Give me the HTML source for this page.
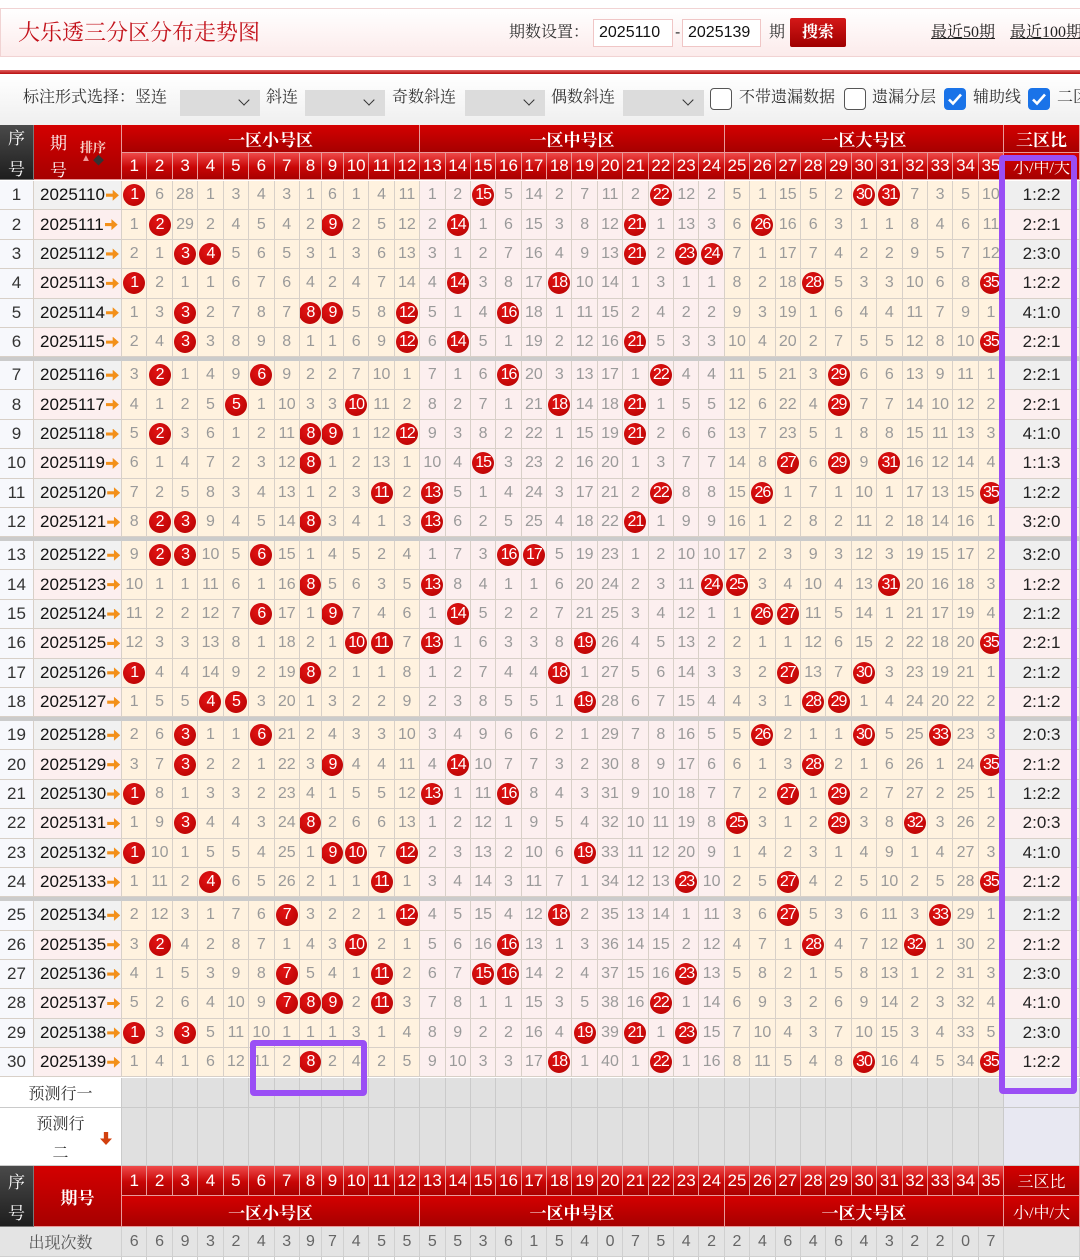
<!DOCTYPE html>
<html><head><meta charset="utf-8"><style>
*{box-sizing:border-box}
body{margin:0;width:1080px;height:1260px;overflow:hidden;position:relative;background:#fff;font-family:"Liberation Sans","Noto Sans CJK SC",sans-serif}
.a{position:absolute}
.ser{font-family:"Liberation Serif","Noto Serif CJK SC",serif}
.tb{left:0;top:8px;width:1100px;height:49px;border:1px solid #f1d3d3;background:linear-gradient(#fff,#fcebeb)}
.t{left:18px;top:8px;line-height:49px;font-size:22px;color:#c3121b}
.lab{font-size:16px;color:#333;line-height:28px}
.inp{top:19px;height:28px;border:1px solid #f0c6c6;background:#fff;font-size:16px;line-height:26px;padding-left:5px;color:#111}
.btn{left:790px;top:18px;width:56px;height:29px;background:linear-gradient(#d41818,#a00000);color:#fff;font-weight:bold;font-size:16px;text-align:center;line-height:29px;border-radius:2px}
.lk{top:19px;font-size:16px;color:#222;text-decoration:underline;line-height:28px}
.rl{left:0;top:70px;width:1080px;height:4px;background:linear-gradient(#e06060,#b80f0f)}
.opt{left:0;top:75px;width:1080px;height:50px;background:linear-gradient(#fff,#efefef)}
.sel{top:90px;height:26px;background:#dcdcdc}
.sel:after{content:"";position:absolute;right:12px;top:6px;width:7px;height:7px;border-right:1.5px solid #333;border-bottom:1.5px solid #333;transform:rotate(45deg)}
.ol{top:84px;font-size:16px;color:#333;line-height:28px}
.cb{top:88px;width:22px;height:22px;border:1.5px solid #555;border-radius:4px;background:#fff}
.ck{top:88px;width:22px;height:22px;border-radius:4px;background:#1a73e8}
.g{display:grid;grid-template-columns:34px 88px repeat(7,25.43px) 22px 22px repeat(26,25.4px) 1fr}
.hd{left:0;top:125px;width:1080px;grid-template-rows:28px 27px}
.hd>div,.fh>div{display:flex;align-items:center;justify-content:center;color:#fff;border-right:1px solid #e89a9a;border-bottom:1px solid #e89a9a}
.dk{background:linear-gradient(#4a4a4a,#1e1e1e)!important;flex-direction:column;font-size:17px;border-color:#777!important}
.rd{background:linear-gradient(#d40000,#a60000)}
.zl{font-size:17px;font-weight:bold}
.nm{background:linear-gradient(#ef4a4a,#c80606 55%,#a80000);font-size:17px}
.body{left:0;top:181px;width:1080px}
.r{height:29.4px}
.r>p{margin:0;border-right:1px solid #d8d0c8;border-bottom:1px solid #d8d0c8;display:flex;align-items:center;justify-content:center;font-size:16px;color:#9a9a9a;overflow:hidden;white-space:nowrap;background:#fff2df}
.r>p:nth-child(n+15):nth-child(-n+26){background:#fcefef}
.r>p:nth-child(1){background:#f7f8fc;color:#333;font-size:17px}
.r>p:nth-child(2){background:#f1f1f1;color:#111;font-size:17px;justify-content:flex-start;padding-left:6px}
.r>p:nth-child(2):after{content:"";width:13px;height:11px;margin-left:1px;background:#f39019;clip-path:polygon(0 36%,52% 36%,52% 0,100% 50%,52% 100%,52% 64%,0 64%)}
.r>p:nth-child(38){background:#efefef;color:#222;font-size:17px}
.r:nth-child(even)>p:nth-child(2),.r:nth-child(even)>p:nth-child(38){background:#fcefef}
.r b{display:flex;flex:none;width:22px;height:22px;border-radius:50%;background:radial-gradient(circle at 40% 35%,#e31414,#b20000);color:#fff;font-weight:normal;font-size:16px;align-items:center;justify-content:center;letter-spacing:-1px}
.sep{height:3.7px;background:#cbcbcb}
.pr{left:0;width:1080px}
.pr>p{margin:0;background:#e0e0e0;border-right:1px solid #cacaca;border-bottom:1px solid #cacaca}
.pr>p:first-child{grid-column:1/3;background:#fff;display:flex;align-items:center;justify-content:center;flex-direction:column;font-size:16px;color:#333}
.pr>p:last-child{background:#e8e8f2}
.fh{left:0;top:1166px;width:1080px;grid-template-rows:30px 31px}
.oc{left:0;top:1227px;width:1080px;height:30px}
.oc>p{margin:0;background:#e4e4e4;border-right:1px solid #d0d0d0;border-bottom:1px solid #d0d0d0;display:flex;align-items:center;justify-content:center;font-size:16px;color:#666}
.oc>p:first-child{grid-column:1/3;color:#555}
.lr{left:0;top:1257px;width:1080px;height:3px}
.lr>p{margin:0;border-right:1px solid #d0d0d0;background:#fff}
.pp{border:6px solid #9a4ef5;border-radius:4px;z-index:5}
</style></head><body>
<div class="a tb"></div>
<div class="a t ser">大乐透三分区分布走势图</div>
<div class="a lab ser" style="left:509px;top:19px">期数设置：</div>
<div class="a inp" style="left:593px;width:80px">2025110</div>
<div class="a lab" style="left:675px;top:19px">-</div>
<div class="a inp" style="left:682px;width:79px">2025139</div>
<div class="a lab ser" style="left:769px;top:19px">期</div>
<div class="a btn ser">搜索</div>
<div class="a lk ser" style="left:931px">最近50期</div>
<div class="a lk ser" style="left:1010px;white-space:nowrap">最近100期</div>
<div class="a rl"></div>
<div class="a opt"></div>
<div class="a ol ser" style="left:23px">标注形式选择：竖连</div>
<div class="a sel" style="left:180px;width:80px"></div>
<div class="a ol ser" style="left:266px">斜连</div>
<div class="a sel" style="left:305px;width:80px"></div>
<div class="a ol ser" style="left:392px">奇数斜连</div>
<div class="a sel" style="left:465px;width:80px"></div>
<div class="a ol ser" style="left:551px">偶数斜连</div>
<div class="a sel" style="left:623px;width:81px"></div>
<div class="a cb" style="left:710px"></div>
<div class="a ol ser" style="left:739px">不带遗漏数据</div>
<div class="a cb" style="left:844px"></div>
<div class="a ol ser" style="left:872px">遗漏分层</div>
<div class="a ck" style="left:944px"><svg width="22" height="22"><path d="M5 11.5l4 4 8-9" fill="none" stroke="#fff" stroke-width="2.6"/></svg></div>
<div class="a ol ser" style="left:973px">辅助线</div>
<div class="a ck" style="left:1028px"><svg width="22" height="22"><path d="M5 11.5l4 4 8-9" fill="none" stroke="#fff" stroke-width="2.6"/></svg></div>
<div class="a ol ser" style="left:1057px;white-space:nowrap">二区</div>

<div class="a g hd">
<div class="dk ser" style="grid-column:1;grid-row:1/3"><span>序</span><span style="margin-top:6px">号</span></div>
<div class="rd ser" style="grid-column:2;grid-row:1/3;position:relative;font-size:17px"><span style="position:absolute;left:16px;top:4px">期</span><span style="position:absolute;left:16px;top:31px">号</span><span style="position:absolute;left:46px;top:12px;font-size:13px;font-weight:bold;color:#f7d0c6">排序</span><span style="position:absolute;left:47px;top:28px;font-size:10px;color:#e99">▲</span><span style="position:absolute;left:59px;top:27px;font-size:11px;color:#333">◆</span></div>
<div class="rd zl ser" style="grid-column:3/15;grid-row:1">一区小号区</div>
<div class="rd zl ser" style="grid-column:15/27;grid-row:1">一区中号区</div>
<div class="rd zl ser" style="grid-column:27/38;grid-row:1">一区大号区</div>
<div class="rd zl ser" style="grid-column:38;grid-row:1">三区比</div>
<div class="nm">1</div><div class="nm">2</div><div class="nm">3</div><div class="nm">4</div><div class="nm">5</div><div class="nm">6</div><div class="nm">7</div><div class="nm">8</div><div class="nm">9</div><div class="nm">10</div><div class="nm">11</div><div class="nm">12</div><div class="nm">13</div><div class="nm">14</div><div class="nm">15</div><div class="nm">16</div><div class="nm">17</div><div class="nm">18</div><div class="nm">19</div><div class="nm">20</div><div class="nm">21</div><div class="nm">22</div><div class="nm">23</div><div class="nm">24</div><div class="nm">25</div><div class="nm">26</div><div class="nm">27</div><div class="nm">28</div><div class="nm">29</div><div class="nm">30</div><div class="nm">31</div><div class="nm">32</div><div class="nm">33</div><div class="nm">34</div><div class="nm">35</div><div class="rd ser" style="font-size:16px">小/中/大</div>
</div>

<div class="a body">
<div>
<div class="g r"><p>1</p><p>2025110</p><p><b>1</b></p><p>6</p><p>28</p><p>1</p><p>3</p><p>4</p><p>3</p><p>1</p><p>6</p><p>1</p><p>4</p><p>11</p><p>1</p><p>2</p><p><b>15</b></p><p>5</p><p>14</p><p>2</p><p>7</p><p>11</p><p>2</p><p><b>22</b></p><p>12</p><p>2</p><p>5</p><p>1</p><p>15</p><p>5</p><p>2</p><p><b>30</b></p><p><b>31</b></p><p>7</p><p>3</p><p>5</p><p>10</p><p>1:2:2</p></div>
<div class="g r"><p>2</p><p>2025111</p><p>1</p><p><b>2</b></p><p>29</p><p>2</p><p>4</p><p>5</p><p>4</p><p>2</p><p><b>9</b></p><p>2</p><p>5</p><p>12</p><p>2</p><p><b>14</b></p><p>1</p><p>6</p><p>15</p><p>3</p><p>8</p><p>12</p><p><b>21</b></p><p>1</p><p>13</p><p>3</p><p>6</p><p><b>26</b></p><p>16</p><p>6</p><p>3</p><p>1</p><p>1</p><p>8</p><p>4</p><p>6</p><p>11</p><p>2:2:1</p></div>
<div class="g r"><p>3</p><p>2025112</p><p>2</p><p>1</p><p><b>3</b></p><p><b>4</b></p><p>5</p><p>6</p><p>5</p><p>3</p><p>1</p><p>3</p><p>6</p><p>13</p><p>3</p><p>1</p><p>2</p><p>7</p><p>16</p><p>4</p><p>9</p><p>13</p><p><b>21</b></p><p>2</p><p><b>23</b></p><p><b>24</b></p><p>7</p><p>1</p><p>17</p><p>7</p><p>4</p><p>2</p><p>2</p><p>9</p><p>5</p><p>7</p><p>12</p><p>2:3:0</p></div>
<div class="g r"><p>4</p><p>2025113</p><p><b>1</b></p><p>2</p><p>1</p><p>1</p><p>6</p><p>7</p><p>6</p><p>4</p><p>2</p><p>4</p><p>7</p><p>14</p><p>4</p><p><b>14</b></p><p>3</p><p>8</p><p>17</p><p><b>18</b></p><p>10</p><p>14</p><p>1</p><p>3</p><p>1</p><p>1</p><p>8</p><p>2</p><p>18</p><p><b>28</b></p><p>5</p><p>3</p><p>3</p><p>10</p><p>6</p><p>8</p><p><b>35</b></p><p>1:2:2</p></div>
<div class="g r"><p>5</p><p>2025114</p><p>1</p><p>3</p><p><b>3</b></p><p>2</p><p>7</p><p>8</p><p>7</p><p><b>8</b></p><p><b>9</b></p><p>5</p><p>8</p><p><b>12</b></p><p>5</p><p>1</p><p>4</p><p><b>16</b></p><p>18</p><p>1</p><p>11</p><p>15</p><p>2</p><p>4</p><p>2</p><p>2</p><p>9</p><p>3</p><p>19</p><p>1</p><p>6</p><p>4</p><p>4</p><p>11</p><p>7</p><p>9</p><p>1</p><p>4:1:0</p></div>
<div class="g r"><p>6</p><p>2025115</p><p>2</p><p>4</p><p><b>3</b></p><p>3</p><p>8</p><p>9</p><p>8</p><p>1</p><p>1</p><p>6</p><p>9</p><p><b>12</b></p><p>6</p><p><b>14</b></p><p>5</p><p>1</p><p>19</p><p>2</p><p>12</p><p>16</p><p><b>21</b></p><p>5</p><p>3</p><p>3</p><p>10</p><p>4</p><p>20</p><p>2</p><p>7</p><p>5</p><p>5</p><p>12</p><p>8</p><p>10</p><p><b>35</b></p><p>2:2:1</p></div>
</div>
<div class="sep"></div>
<div>
<div class="g r"><p>7</p><p>2025116</p><p>3</p><p><b>2</b></p><p>1</p><p>4</p><p>9</p><p><b>6</b></p><p>9</p><p>2</p><p>2</p><p>7</p><p>10</p><p>1</p><p>7</p><p>1</p><p>6</p><p><b>16</b></p><p>20</p><p>3</p><p>13</p><p>17</p><p>1</p><p><b>22</b></p><p>4</p><p>4</p><p>11</p><p>5</p><p>21</p><p>3</p><p><b>29</b></p><p>6</p><p>6</p><p>13</p><p>9</p><p>11</p><p>1</p><p>2:2:1</p></div>
<div class="g r"><p>8</p><p>2025117</p><p>4</p><p>1</p><p>2</p><p>5</p><p><b>5</b></p><p>1</p><p>10</p><p>3</p><p>3</p><p><b>10</b></p><p>11</p><p>2</p><p>8</p><p>2</p><p>7</p><p>1</p><p>21</p><p><b>18</b></p><p>14</p><p>18</p><p><b>21</b></p><p>1</p><p>5</p><p>5</p><p>12</p><p>6</p><p>22</p><p>4</p><p><b>29</b></p><p>7</p><p>7</p><p>14</p><p>10</p><p>12</p><p>2</p><p>2:2:1</p></div>
<div class="g r"><p>9</p><p>2025118</p><p>5</p><p><b>2</b></p><p>3</p><p>6</p><p>1</p><p>2</p><p>11</p><p><b>8</b></p><p><b>9</b></p><p>1</p><p>12</p><p><b>12</b></p><p>9</p><p>3</p><p>8</p><p>2</p><p>22</p><p>1</p><p>15</p><p>19</p><p><b>21</b></p><p>2</p><p>6</p><p>6</p><p>13</p><p>7</p><p>23</p><p>5</p><p>1</p><p>8</p><p>8</p><p>15</p><p>11</p><p>13</p><p>3</p><p>4:1:0</p></div>
<div class="g r"><p>10</p><p>2025119</p><p>6</p><p>1</p><p>4</p><p>7</p><p>2</p><p>3</p><p>12</p><p><b>8</b></p><p>1</p><p>2</p><p>13</p><p>1</p><p>10</p><p>4</p><p><b>15</b></p><p>3</p><p>23</p><p>2</p><p>16</p><p>20</p><p>1</p><p>3</p><p>7</p><p>7</p><p>14</p><p>8</p><p><b>27</b></p><p>6</p><p><b>29</b></p><p>9</p><p><b>31</b></p><p>16</p><p>12</p><p>14</p><p>4</p><p>1:1:3</p></div>
<div class="g r"><p>11</p><p>2025120</p><p>7</p><p>2</p><p>5</p><p>8</p><p>3</p><p>4</p><p>13</p><p>1</p><p>2</p><p>3</p><p><b>11</b></p><p>2</p><p><b>13</b></p><p>5</p><p>1</p><p>4</p><p>24</p><p>3</p><p>17</p><p>21</p><p>2</p><p><b>22</b></p><p>8</p><p>8</p><p>15</p><p><b>26</b></p><p>1</p><p>7</p><p>1</p><p>10</p><p>1</p><p>17</p><p>13</p><p>15</p><p><b>35</b></p><p>1:2:2</p></div>
<div class="g r"><p>12</p><p>2025121</p><p>8</p><p><b>2</b></p><p><b>3</b></p><p>9</p><p>4</p><p>5</p><p>14</p><p><b>8</b></p><p>3</p><p>4</p><p>1</p><p>3</p><p><b>13</b></p><p>6</p><p>2</p><p>5</p><p>25</p><p>4</p><p>18</p><p>22</p><p><b>21</b></p><p>1</p><p>9</p><p>9</p><p>16</p><p>1</p><p>2</p><p>8</p><p>2</p><p>11</p><p>2</p><p>18</p><p>14</p><p>16</p><p>1</p><p>3:2:0</p></div>
</div>
<div class="sep"></div>
<div>
<div class="g r"><p>13</p><p>2025122</p><p>9</p><p><b>2</b></p><p><b>3</b></p><p>10</p><p>5</p><p><b>6</b></p><p>15</p><p>1</p><p>4</p><p>5</p><p>2</p><p>4</p><p>1</p><p>7</p><p>3</p><p><b>16</b></p><p><b>17</b></p><p>5</p><p>19</p><p>23</p><p>1</p><p>2</p><p>10</p><p>10</p><p>17</p><p>2</p><p>3</p><p>9</p><p>3</p><p>12</p><p>3</p><p>19</p><p>15</p><p>17</p><p>2</p><p>3:2:0</p></div>
<div class="g r"><p>14</p><p>2025123</p><p>10</p><p>1</p><p>1</p><p>11</p><p>6</p><p>1</p><p>16</p><p><b>8</b></p><p>5</p><p>6</p><p>3</p><p>5</p><p><b>13</b></p><p>8</p><p>4</p><p>1</p><p>1</p><p>6</p><p>20</p><p>24</p><p>2</p><p>3</p><p>11</p><p><b>24</b></p><p><b>25</b></p><p>3</p><p>4</p><p>10</p><p>4</p><p>13</p><p><b>31</b></p><p>20</p><p>16</p><p>18</p><p>3</p><p>1:2:2</p></div>
<div class="g r"><p>15</p><p>2025124</p><p>11</p><p>2</p><p>2</p><p>12</p><p>7</p><p><b>6</b></p><p>17</p><p>1</p><p><b>9</b></p><p>7</p><p>4</p><p>6</p><p>1</p><p><b>14</b></p><p>5</p><p>2</p><p>2</p><p>7</p><p>21</p><p>25</p><p>3</p><p>4</p><p>12</p><p>1</p><p>1</p><p><b>26</b></p><p><b>27</b></p><p>11</p><p>5</p><p>14</p><p>1</p><p>21</p><p>17</p><p>19</p><p>4</p><p>2:1:2</p></div>
<div class="g r"><p>16</p><p>2025125</p><p>12</p><p>3</p><p>3</p><p>13</p><p>8</p><p>1</p><p>18</p><p>2</p><p>1</p><p><b>10</b></p><p><b>11</b></p><p>7</p><p><b>13</b></p><p>1</p><p>6</p><p>3</p><p>3</p><p>8</p><p><b>19</b></p><p>26</p><p>4</p><p>5</p><p>13</p><p>2</p><p>2</p><p>1</p><p>1</p><p>12</p><p>6</p><p>15</p><p>2</p><p>22</p><p>18</p><p>20</p><p><b>35</b></p><p>2:2:1</p></div>
<div class="g r"><p>17</p><p>2025126</p><p><b>1</b></p><p>4</p><p>4</p><p>14</p><p>9</p><p>2</p><p>19</p><p><b>8</b></p><p>2</p><p>1</p><p>1</p><p>8</p><p>1</p><p>2</p><p>7</p><p>4</p><p>4</p><p><b>18</b></p><p>1</p><p>27</p><p>5</p><p>6</p><p>14</p><p>3</p><p>3</p><p>2</p><p><b>27</b></p><p>13</p><p>7</p><p><b>30</b></p><p>3</p><p>23</p><p>19</p><p>21</p><p>1</p><p>2:1:2</p></div>
<div class="g r"><p>18</p><p>2025127</p><p>1</p><p>5</p><p>5</p><p><b>4</b></p><p><b>5</b></p><p>3</p><p>20</p><p>1</p><p>3</p><p>2</p><p>2</p><p>9</p><p>2</p><p>3</p><p>8</p><p>5</p><p>5</p><p>1</p><p><b>19</b></p><p>28</p><p>6</p><p>7</p><p>15</p><p>4</p><p>4</p><p>3</p><p>1</p><p><b>28</b></p><p><b>29</b></p><p>1</p><p>4</p><p>24</p><p>20</p><p>22</p><p>2</p><p>2:1:2</p></div>
</div>
<div class="sep"></div>
<div>
<div class="g r"><p>19</p><p>2025128</p><p>2</p><p>6</p><p><b>3</b></p><p>1</p><p>1</p><p><b>6</b></p><p>21</p><p>2</p><p>4</p><p>3</p><p>3</p><p>10</p><p>3</p><p>4</p><p>9</p><p>6</p><p>6</p><p>2</p><p>1</p><p>29</p><p>7</p><p>8</p><p>16</p><p>5</p><p>5</p><p><b>26</b></p><p>2</p><p>1</p><p>1</p><p><b>30</b></p><p>5</p><p>25</p><p><b>33</b></p><p>23</p><p>3</p><p>2:0:3</p></div>
<div class="g r"><p>20</p><p>2025129</p><p>3</p><p>7</p><p><b>3</b></p><p>2</p><p>2</p><p>1</p><p>22</p><p>3</p><p><b>9</b></p><p>4</p><p>4</p><p>11</p><p>4</p><p><b>14</b></p><p>10</p><p>7</p><p>7</p><p>3</p><p>2</p><p>30</p><p>8</p><p>9</p><p>17</p><p>6</p><p>6</p><p>1</p><p>3</p><p><b>28</b></p><p>2</p><p>1</p><p>6</p><p>26</p><p>1</p><p>24</p><p><b>35</b></p><p>2:1:2</p></div>
<div class="g r"><p>21</p><p>2025130</p><p><b>1</b></p><p>8</p><p>1</p><p>3</p><p>3</p><p>2</p><p>23</p><p>4</p><p>1</p><p>5</p><p>5</p><p>12</p><p><b>13</b></p><p>1</p><p>11</p><p><b>16</b></p><p>8</p><p>4</p><p>3</p><p>31</p><p>9</p><p>10</p><p>18</p><p>7</p><p>7</p><p>2</p><p><b>27</b></p><p>1</p><p><b>29</b></p><p>2</p><p>7</p><p>27</p><p>2</p><p>25</p><p>1</p><p>1:2:2</p></div>
<div class="g r"><p>22</p><p>2025131</p><p>1</p><p>9</p><p><b>3</b></p><p>4</p><p>4</p><p>3</p><p>24</p><p><b>8</b></p><p>2</p><p>6</p><p>6</p><p>13</p><p>1</p><p>2</p><p>12</p><p>1</p><p>9</p><p>5</p><p>4</p><p>32</p><p>10</p><p>11</p><p>19</p><p>8</p><p><b>25</b></p><p>3</p><p>1</p><p>2</p><p><b>29</b></p><p>3</p><p>8</p><p><b>32</b></p><p>3</p><p>26</p><p>2</p><p>2:0:3</p></div>
<div class="g r"><p>23</p><p>2025132</p><p><b>1</b></p><p>10</p><p>1</p><p>5</p><p>5</p><p>4</p><p>25</p><p>1</p><p><b>9</b></p><p><b>10</b></p><p>7</p><p><b>12</b></p><p>2</p><p>3</p><p>13</p><p>2</p><p>10</p><p>6</p><p><b>19</b></p><p>33</p><p>11</p><p>12</p><p>20</p><p>9</p><p>1</p><p>4</p><p>2</p><p>3</p><p>1</p><p>4</p><p>9</p><p>1</p><p>4</p><p>27</p><p>3</p><p>4:1:0</p></div>
<div class="g r"><p>24</p><p>2025133</p><p>1</p><p>11</p><p>2</p><p><b>4</b></p><p>6</p><p>5</p><p>26</p><p>2</p><p>1</p><p>1</p><p><b>11</b></p><p>1</p><p>3</p><p>4</p><p>14</p><p>3</p><p>11</p><p>7</p><p>1</p><p>34</p><p>12</p><p>13</p><p><b>23</b></p><p>10</p><p>2</p><p>5</p><p><b>27</b></p><p>4</p><p>2</p><p>5</p><p>10</p><p>2</p><p>5</p><p>28</p><p><b>35</b></p><p>2:1:2</p></div>
</div>
<div class="sep"></div>
<div>
<div class="g r"><p>25</p><p>2025134</p><p>2</p><p>12</p><p>3</p><p>1</p><p>7</p><p>6</p><p><b>7</b></p><p>3</p><p>2</p><p>2</p><p>1</p><p><b>12</b></p><p>4</p><p>5</p><p>15</p><p>4</p><p>12</p><p><b>18</b></p><p>2</p><p>35</p><p>13</p><p>14</p><p>1</p><p>11</p><p>3</p><p>6</p><p><b>27</b></p><p>5</p><p>3</p><p>6</p><p>11</p><p>3</p><p><b>33</b></p><p>29</p><p>1</p><p>2:1:2</p></div>
<div class="g r"><p>26</p><p>2025135</p><p>3</p><p><b>2</b></p><p>4</p><p>2</p><p>8</p><p>7</p><p>1</p><p>4</p><p>3</p><p><b>10</b></p><p>2</p><p>1</p><p>5</p><p>6</p><p>16</p><p><b>16</b></p><p>13</p><p>1</p><p>3</p><p>36</p><p>14</p><p>15</p><p>2</p><p>12</p><p>4</p><p>7</p><p>1</p><p><b>28</b></p><p>4</p><p>7</p><p>12</p><p><b>32</b></p><p>1</p><p>30</p><p>2</p><p>2:1:2</p></div>
<div class="g r"><p>27</p><p>2025136</p><p>4</p><p>1</p><p>5</p><p>3</p><p>9</p><p>8</p><p><b>7</b></p><p>5</p><p>4</p><p>1</p><p><b>11</b></p><p>2</p><p>6</p><p>7</p><p><b>15</b></p><p><b>16</b></p><p>14</p><p>2</p><p>4</p><p>37</p><p>15</p><p>16</p><p><b>23</b></p><p>13</p><p>5</p><p>8</p><p>2</p><p>1</p><p>5</p><p>8</p><p>13</p><p>1</p><p>2</p><p>31</p><p>3</p><p>2:3:0</p></div>
<div class="g r"><p>28</p><p>2025137</p><p>5</p><p>2</p><p>6</p><p>4</p><p>10</p><p>9</p><p><b>7</b></p><p><b>8</b></p><p><b>9</b></p><p>2</p><p><b>11</b></p><p>3</p><p>7</p><p>8</p><p>1</p><p>1</p><p>15</p><p>3</p><p>5</p><p>38</p><p>16</p><p><b>22</b></p><p>1</p><p>14</p><p>6</p><p>9</p><p>3</p><p>2</p><p>6</p><p>9</p><p>14</p><p>2</p><p>3</p><p>32</p><p>4</p><p>4:1:0</p></div>
<div class="g r"><p>29</p><p>2025138</p><p><b>1</b></p><p>3</p><p><b>3</b></p><p>5</p><p>11</p><p>10</p><p>1</p><p>1</p><p>1</p><p>3</p><p>1</p><p>4</p><p>8</p><p>9</p><p>2</p><p>2</p><p>16</p><p>4</p><p><b>19</b></p><p>39</p><p><b>21</b></p><p>1</p><p><b>23</b></p><p>15</p><p>7</p><p>10</p><p>4</p><p>3</p><p>7</p><p>10</p><p>15</p><p>3</p><p>4</p><p>33</p><p>5</p><p>2:3:0</p></div>
<div class="g r"><p>30</p><p>2025139</p><p>1</p><p>4</p><p>1</p><p>6</p><p>12</p><p>11</p><p>2</p><p><b>8</b></p><p>2</p><p>4</p><p>2</p><p>5</p><p>9</p><p>10</p><p>3</p><p>3</p><p>17</p><p><b>18</b></p><p>1</p><p>40</p><p>1</p><p><b>22</b></p><p>1</p><p>16</p><p>8</p><p>11</p><p>5</p><p>4</p><p>8</p><p><b>30</b></p><p>16</p><p>4</p><p>5</p><p>34</p><p><b>35</b></p><p>1:2:2</p></div>
</div>
</div>

<div class="a g pr" style="top:1078px;height:30px"><p class="ser">预测行一</p><p></p><p></p><p></p><p></p><p></p><p></p><p></p><p></p><p></p><p></p><p></p><p></p><p></p><p></p><p></p><p></p><p></p><p></p><p></p><p></p><p></p><p></p><p></p><p></p><p></p><p></p><p></p><p></p><p></p><p></p><p></p><p></p><p></p><p></p><p></p><p></p></div>
<div class="a g pr" style="top:1108px;height:58px"><p class="ser"><span>预测行</span><span style="margin-top:6px">二</span></p><p></p><p></p><p></p><p></p><p></p><p></p><p></p><p></p><p></p><p></p><p></p><p></p><p></p><p></p><p></p><p></p><p></p><p></p><p></p><p></p><p></p><p></p><p></p><p></p><p></p><p></p><p></p><p></p><p></p><p></p><p></p><p></p><p></p><p></p><p></p><p></p></div>
<div class="a" style="left:100px;top:1132px;width:12px;height:13px;background:#d2400e;clip-path:polygon(32% 0,68% 0,68% 50%,100% 50%,50% 100%,0 50%,32% 50%)"></div>

<div class="a g fh">
<div class="dk ser" style="grid-column:1;grid-row:1/3"><span>序</span><span style="margin-top:6px">号</span></div>
<div class="rd ser" style="grid-column:2;grid-row:1/3;font-size:17px;font-weight:bold">期号</div>
<div class="rd zl ser" style="grid-column:3/15;grid-row:2">一区小号区</div>
<div class="rd zl ser" style="grid-column:15/27;grid-row:2">一区中号区</div>
<div class="rd zl ser" style="grid-column:27/38;grid-row:2">一区大号区</div>
<div class="rd ser" style="grid-column:38;grid-row:1;font-size:16px">三区比</div>
<div class="rd ser" style="grid-column:38;grid-row:2;font-size:16px">小/中/大</div>
<div class="nm">1</div><div class="nm">2</div><div class="nm">3</div><div class="nm">4</div><div class="nm">5</div><div class="nm">6</div><div class="nm">7</div><div class="nm">8</div><div class="nm">9</div><div class="nm">10</div><div class="nm">11</div><div class="nm">12</div><div class="nm">13</div><div class="nm">14</div><div class="nm">15</div><div class="nm">16</div><div class="nm">17</div><div class="nm">18</div><div class="nm">19</div><div class="nm">20</div><div class="nm">21</div><div class="nm">22</div><div class="nm">23</div><div class="nm">24</div><div class="nm">25</div><div class="nm">26</div><div class="nm">27</div><div class="nm">28</div><div class="nm">29</div><div class="nm">30</div><div class="nm">31</div><div class="nm">32</div><div class="nm">33</div><div class="nm">34</div><div class="nm">35</div>
</div>

<div class="a g oc"><p class="ser">出现次数</p><p>6</p><p>6</p><p>9</p><p>3</p><p>2</p><p>4</p><p>3</p><p>9</p><p>7</p><p>4</p><p>5</p><p>5</p><p>5</p><p>5</p><p>3</p><p>6</p><p>1</p><p>5</p><p>4</p><p>0</p><p>7</p><p>5</p><p>4</p><p>2</p><p>2</p><p>4</p><p>6</p><p>4</p><p>6</p><p>4</p><p>3</p><p>2</p><p>2</p><p>0</p><p>7</p><p></p></div>
<div class="a g lr"><p style="grid-column:1/3"></p><p></p><p></p><p></p><p></p><p></p><p></p><p></p><p></p><p></p><p></p><p></p><p></p><p></p><p></p><p></p><p></p><p></p><p></p><p></p><p></p><p></p><p></p><p></p><p></p><p></p><p></p><p></p><p></p><p></p><p></p><p></p><p></p><p></p><p></p><p></p><p></p></div>

<div class="a pp" style="left:999px;top:155px;width:78px;height:939px"></div>
<div class="a pp" style="left:250px;top:1040px;width:117px;height:56px"></div>
</body></html>
